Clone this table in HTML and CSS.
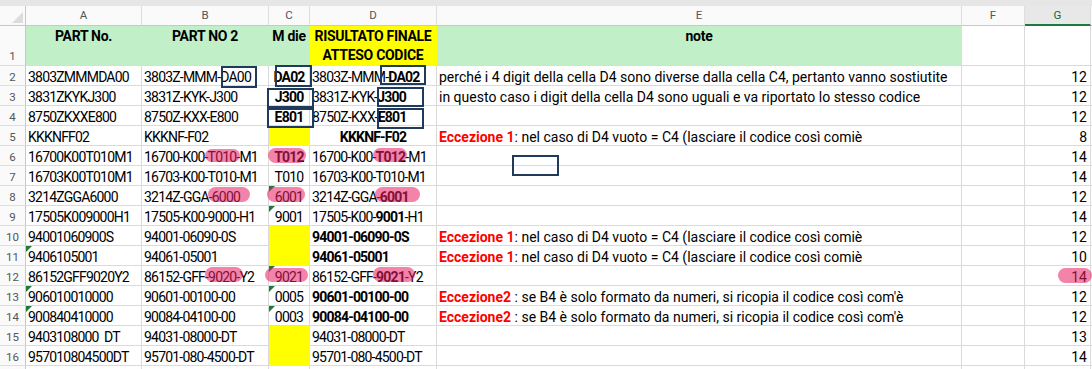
FILE: index.html
```html
<!DOCTYPE html>
<html lang="it">
<head>
<meta charset="utf-8">
<title>Foglio</title>
<link rel="stylesheet" href="styles.css">
</head>
<body>
<div class="sheet">
  <div class="topband"></div>
  <div class="grid">
    <div class="corner"></div>
    <div class="colhead">A</div>
    <div class="colhead">B</div>
    <div class="colhead">C</div>
    <div class="colhead">D</div>
    <div class="colhead">E</div>
    <div class="colhead">F</div>
    <div class="colhead sel">G</div>
    <div class="colhead rest"></div>

    <div class="rowhead r1">1</div>
    <div class="cell hdr green c">PART No.</div>
    <div class="cell hdr green c">PART NO 2</div>
    <div class="cell hdr green c">M die</div>
    <div class="cell hdr yellow c">RISULTATO FINALE<br>ATTESO CODICE</div>
    <div class="cell hdr green c">note</div>
    <div class="cell"></div>
    <div class="cell"></div>
    <div class="cell rest"></div>

    <div class="rowhead">2</div>
    <div class="cell code">3803ZMMMDA00</div>
    <div class="cell code">3803Z-MMM-DA00</div>
    <div class="cell code c b">DA02</div>
    <div class="cell code">3803Z-MMM-<b>DA02</b></div>
    <div class="cell">perché i 4 digit della cella D4 sono diverse dalla cella C4, pertanto vanno sostiutite</div>
    <div class="cell"></div>
    <div class="cell r">12</div>
    <div class="cell rest"></div>

    <div class="rowhead">3</div>
    <div class="cell code">3831ZKYKJ300</div>
    <div class="cell code">3831Z-KYK-J300</div>
    <div class="cell code c b">J300</div>
    <div class="cell code">3831Z-KYK-<b>J300</b></div>
    <div class="cell">in questo caso i digit della cella D4 sono uguali e va riportato lo stesso codice</div>
    <div class="cell"></div>
    <div class="cell r">12</div>
    <div class="cell rest"></div>

    <div class="rowhead">4</div>
    <div class="cell code">8750ZKXXE800</div>
    <div class="cell code">8750Z-KXX-E800</div>
    <div class="cell code c b">E801</div>
    <div class="cell code">8750Z-KXX-<b>E801</b></div>
    <div class="cell"></div>
    <div class="cell"></div>
    <div class="cell r">12</div>
    <div class="cell rest"></div>

    <div class="rowhead">5</div>
    <div class="cell code">KKKNFF02</div>
    <div class="cell code">KKKNF-F02</div>
    <div class="cell yellow"></div>
    <div class="cell code c b">KKKNF-F02</div>
    <div class="cell"><span class="red">Eccezione 1</span>: nel caso di D4 vuoto = C4 (lasciare il codice così comiè</div>
    <div class="cell"></div>
    <div class="cell r">8</div>
    <div class="cell rest"></div>

    <div class="rowhead">6</div>
    <div class="cell code">16700K00T010M1</div>
    <div class="cell code">16700-K00-T010-M1</div>
    <div class="cell code c b">T012</div>
    <div class="cell code">16700-K00-<b>T012</b>-M1</div>
    <div class="cell"></div>
    <div class="cell"></div>
    <div class="cell r">14</div>
    <div class="cell rest"></div>

    <div class="rowhead">7</div>
    <div class="cell code">16703K00T010M1</div>
    <div class="cell code">16703-K00-T010-M1</div>
    <div class="cell code c">T010</div>
    <div class="cell code">16703-K00-T010-M1</div>
    <div class="cell"></div>
    <div class="cell"></div>
    <div class="cell r">14</div>
    <div class="cell rest"></div>

    <div class="rowhead">8</div>
    <div class="cell code">3214ZGGA6000</div>
    <div class="cell code">3214Z-GGA-6000</div>
    <div class="cell code c tri">6001</div>
    <div class="cell code">3214Z-GGA-<b>6001</b></div>
    <div class="cell"></div>
    <div class="cell"></div>
    <div class="cell r">12</div>
    <div class="cell rest"></div>

    <div class="rowhead">9</div>
    <div class="cell code">17505K009000H1</div>
    <div class="cell code">17505-K00-9000-H1</div>
    <div class="cell code c tri">9001</div>
    <div class="cell code">17505-K00-<b>9001</b>-H1</div>
    <div class="cell"></div>
    <div class="cell"></div>
    <div class="cell r">14</div>
    <div class="cell rest"></div>

    <div class="rowhead">10</div>
    <div class="cell code">94001060900S</div>
    <div class="cell code">94001-06090-0S</div>
    <div class="cell yellow"></div>
    <div class="cell code b">94001-06090-0S</div>
    <div class="cell"><span class="red">Eccezione 1</span>: nel caso di D4 vuoto = C4 (lasciare il codice così comiè</div>
    <div class="cell"></div>
    <div class="cell r">12</div>
    <div class="cell rest"></div>

    <div class="rowhead">11</div>
    <div class="cell code tri">9406105001</div>
    <div class="cell code">94061-05001</div>
    <div class="cell yellow"></div>
    <div class="cell code b">94061-05001</div>
    <div class="cell"><span class="red">Eccezione 1</span>: nel caso di D4 vuoto = C4 (lasciare il codice così comiè</div>
    <div class="cell"></div>
    <div class="cell r">10</div>
    <div class="cell rest"></div>

    <div class="rowhead">12</div>
    <div class="cell code">86152GFF9020Y2</div>
    <div class="cell code">86152-GFF-9020-Y2</div>
    <div class="cell code c tri">9021</div>
    <div class="cell code">86152-GFF-<b>9021</b>-Y2</div>
    <div class="cell"></div>
    <div class="cell"></div>
    <div class="cell r">14</div>
    <div class="cell rest"></div>

    <div class="rowhead">13</div>
    <div class="cell code tri">906010010000</div>
    <div class="cell code">90601-00100-00</div>
    <div class="cell code c tri">0005</div>
    <div class="cell code b">90601-00100-00</div>
    <div class="cell"><span class="red">Eccezione2</span> : se B4 è solo formato da numeri, si ricopia il codice così com'è</div>
    <div class="cell"></div>
    <div class="cell r">12</div>
    <div class="cell rest"></div>

    <div class="rowhead">14</div>
    <div class="cell code tri">900840410000</div>
    <div class="cell code">90084-04100-00</div>
    <div class="cell code c tri">0003</div>
    <div class="cell code b">90084-04100-00</div>
    <div class="cell"><span class="red">Eccezione2</span> : se B4 è solo formato da numeri, si ricopia il codice così com'è</div>
    <div class="cell"></div>
    <div class="cell r">12</div>
    <div class="cell rest"></div>

    <div class="rowhead">15</div>
    <div class="cell code pre">9403108000  DT</div>
    <div class="cell code">94031-08000-DT</div>
    <div class="cell yellow"></div>
    <div class="cell code">94031-08000-DT</div>
    <div class="cell"></div>
    <div class="cell"></div>
    <div class="cell r">13</div>
    <div class="cell rest"></div>

    <div class="rowhead">16</div>
    <div class="cell code">957010804500DT</div>
    <div class="cell code">95701-080-4500-DT</div>
    <div class="cell yellow"></div>
    <div class="cell code">95701-080-4500-DT</div>
    <div class="cell"></div>
    <div class="cell"></div>
    <div class="cell r">14</div>
    <div class="cell rest"></div>

    <div class="rowhead"></div>
    <div class="cell"></div>
    <div class="cell"></div>
    <div class="cell"></div>
    <div class="cell"></div>
    <div class="cell"></div>
    <div class="cell"></div>
    <div class="cell"></div>
    <div class="cell rest"></div>
  </div>

  <div class="mark hl h1"></div>
  <div class="mark hl h2"></div>
  <div class="mark hl h3"></div>
  <div class="mark hl h4"></div>
  <div class="mark hl h5"></div>
  <div class="mark hl h6"></div>
  <div class="mark hl h7"></div>
  <div class="mark hl h8"></div>
  <div class="mark hl h9"></div>
  <div class="mark hl h10"></div>

  <div class="mark box b1"></div>
  <div class="mark box b2"></div>
  <div class="mark box b3"></div>
  <div class="mark box b4"></div>
  <div class="mark box b5"></div>
  <div class="mark box b6"></div>
  <div class="mark box b7"></div>
  <div class="mark box b8"></div>
</div>
</body>
</html>
```

FILE: styles.css
```css
* { box-sizing: border-box; }
html, body { margin: 0; padding: 0; background: #ffffff; }
body {
  font-family: Roboto, "Liberation Sans", Arial, sans-serif;
  font-size: 14px;
  color: #000;
  overflow: hidden;
}
.sheet {
  position: relative;
  width: 1092px;
  height: 369px;
  overflow: hidden;
}
.topband { height: 6px; background: #e6e6e6; }

.grid {
  display: grid;
  grid-template-columns: 26px 116px 127px 41px 127px 525px 63px 66px 1fr;
  grid-template-rows: 20px 40px repeat(16, 20px);
}

.corner {
  position: relative;
  background: #fafafa;
  border-right: 1px solid #c8c8c8;
  border-bottom: 1px solid #c8c8c8;
}
.corner::after {
  content: "";
  position: absolute;
  right: 2px;
  bottom: 2px;
  border-left: 11px solid transparent;
  border-bottom: 11px solid #dcdcdc;
}

.colhead {
  background: #fafafa;
  color: #555;
  font-size: 11.5px;
  line-height: 19px;
  text-align: center;
  border-right: 1px solid #dedede;
  border-bottom: 1px solid #c8c8c8;
}
.colhead.sel {
  background: #e8e8e8;
  color: #0f6a34;
  border-bottom: 2px solid #1b7a3e;
  line-height: 18px;
}
.colhead.rest { border-right: none; }

.rowhead {
  background: #fafafa;
  color: #555;
  font-size: 11.5px;
  line-height: 18px;
  padding-top: 2px;
  text-align: center;
  border-right: 1px solid #c8c8c8;
  border-bottom: 1px solid #dedede;
}
.rowhead.r1 {
  display: flex;
  align-items: flex-end;
  justify-content: center;
  padding-top: 0;
}

.cell {
  position: relative;
  line-height: 18px;
  padding: 2px 2px 0 2px;
  white-space: nowrap;
  border-right: 1px solid #dadada;
  border-bottom: 1px solid #dadada;
}
.cell.rest { border-right: none; }
.cell.code { letter-spacing: -0.8px; }
.cell.hdr {
  font-weight: bold;
  line-height: 19px;
  padding-top: 1px;
  letter-spacing: -0.3px;
}
.cell.c { text-align: center; }
.cell.r { text-align: right; padding-right: 3px; }
.cell.b { font-weight: bold; }
.cell.pre { white-space: pre; }

.green { background: #c1f0c8; border-right-color: #c1f0c8; }
.yellow { background: #ffff00; border-right-color: #ffff00; border-bottom-color: #ffff00; }

.red { color: #ff0000; font-weight: bold; }

.tri::before {
  content: "";
  position: absolute;
  left: 0;
  top: 0;
  border-top: 6px solid #1f7a3a;
  border-right: 6px solid transparent;
}

.mark { position: absolute; pointer-events: none; }

.hl {
  background: rgba(233, 30, 99, 0.55);
  border-radius: 999px;
  filter: blur(0.4px);
}
.h1 { left: 205px; top: 149px; width: 35px; height: 13px; }
.h2 { left: 268px; top: 148px; width: 38px; height: 15px; }
.h3 { left: 373px; top: 148px; width: 34px; height: 14px; }
.h4 { left: 208px; top: 187px; width: 42px; height: 15px; }
.h5 { left: 267px; top: 187px; width: 38px; height: 15px; }
.h6 { left: 375px; top: 187px; width: 45px; height: 15px; }
.h7 { left: 205px; top: 267px; width: 38px; height: 15px; }
.h8 { left: 265px; top: 268px; width: 43px; height: 14px; }
.h9 { left: 373px; top: 267px; width: 42px; height: 15px; }
.h10 { left: 1058px; top: 268px; width: 34px; height: 15px; }

.box { border: 2px solid #1f3a5a; }
.b1 { left: 221px; top: 66px; width: 36px; height: 22px; }
.b2 { left: 275px; top: 65px; width: 37px; height: 22px; }
.b3 { left: 267px; top: 88px; width: 47px; height: 20px; }
.b4 { left: 267px; top: 108px; width: 47px; height: 20px; }
.b5 { left: 380px; top: 65px; width: 46px; height: 20px; }
.b6 { left: 377px; top: 87px; width: 47px; height: 20px; }
.b7 { left: 377px; top: 108px; width: 47px; height: 21px; }
.b8 { left: 512px; top: 155px; width: 47px; height: 21px; }
```
